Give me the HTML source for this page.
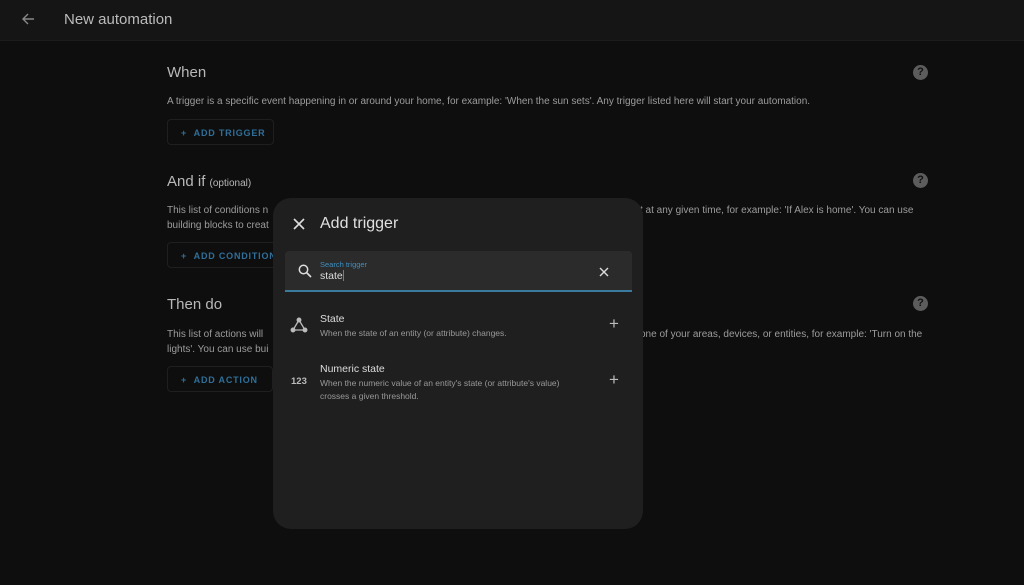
<!DOCTYPE html>
<html><head><meta charset="utf-8"><style>
*{margin:0;padding:0;box-sizing:border-box}
body{width:1024px;height:585px;background:#0e0e0e;font-family:"Liberation Sans",sans-serif;position:relative;overflow:hidden;color:#aaa}
.hdr{position:absolute;left:0;top:0;width:1024px;height:41px;background:#151515;border-bottom:1px solid #1c1c1c}
.abs{position:absolute;white-space:nowrap}
.h{font-size:15px;color:#b8b8b8}
.p{font-size:10px;color:#9c9c9c}
.btn{position:absolute;white-space:nowrap;height:26px;border:1px solid #1f1f1f;border-radius:4px;color:#2f6f99;font-size:9px;font-weight:bold;letter-spacing:0.8px;padding:8px 0 0 13px}
.q{position:absolute;width:15px;height:15px;border-radius:50%;background:#5c5c5c;color:#111;font-size:11px;font-weight:bold;text-align:center;line-height:15px}
.dlg{position:absolute;left:273px;top:198px;width:370px;height:331px;background:#1f1f1f;border-radius:18px}
</style></head><body>
<div class="hdr"></div>
<svg class="abs" style="left:20px;top:11px" width="16" height="16" viewBox="0 0 16 16"><path d="M14 8H3M8 3L3 8l5 5" stroke="#888" stroke-width="1.4" fill="none"/></svg>
<div class="abs" style="left:64px;top:11px;font-size:15px;color:#bbb">New automation</div>

<div class="abs h" style="left:167px;top:64px">When</div>
<div class="abs p" style="left:167px;top:96px">A trigger is a specific event happening in or around your home, for example: 'When the sun sets'. Any trigger listed here will start your automation.</div>
<div class="btn" style="left:167px;top:119px;width:107px">+&nbsp;&nbsp;ADD TRIGGER</div>
<div class="q" style="left:913px;top:65px">?</div>

<div class="abs h" style="left:167px;top:173px">And if <span style="font-size:10px">(optional)</span></div>
<div class="abs p" style="left:167px;top:205px">This list of conditions n</div>
<div class="abs p" style="left:167px;top:220px">building blocks to creat</div>
<div class="abs p" style="left:640px;top:205px">t at any given time, for example: 'If Alex is home'. You can use</div>
<div class="btn" style="left:167px;top:242px;width:120px">+&nbsp;&nbsp;ADD CONDITION</div>
<div class="q" style="left:913px;top:173px">?</div>

<div class="abs h" style="left:167px;top:296px">Then do</div>
<div class="abs p" style="left:167px;top:329px">This list of actions will</div>
<div class="abs p" style="left:167px;top:344px">lights'. You can use bui</div>
<div class="abs p" style="left:640px;top:329px">one of your areas, devices, or entities, for example: 'Turn on the</div>
<div class="btn" style="left:167px;top:366px;width:106px">+&nbsp;&nbsp;ADD ACTION</div>
<div class="q" style="left:913px;top:296px">?</div>

<div class="dlg">
<svg class="abs" style="left:19px;top:19px" width="14" height="14" viewBox="0 0 14 14"><path d="M2 2l10 10M12 2L2 12" stroke="#ddd" stroke-width="1.6"/></svg>
<div class="abs" style="left:47px;top:17px;font-size:16px;color:#e0e0e0">Add trigger</div>
<div class="abs" style="left:12px;top:53px;width:347px;height:41px;background:#2b2b2b;border-radius:4px 4px 0 0;border-bottom:2px solid #3a7a9e"></div>
<svg class="abs" style="left:25px;top:66px" width="14" height="14" viewBox="0 0 14 14"><circle cx="5.5" cy="5.5" r="4.2" stroke="#ddd" stroke-width="1.5" fill="none"/><path d="M8.5 8.5L13 13" stroke="#ddd" stroke-width="1.7"/></svg>
<div class="abs" style="left:47px;top:62px;font-size:7.5px;color:#3d8fc0">Search trigger</div>
<div class="abs" style="left:47px;top:72px;font-size:10.5px;color:#ddd">state<span style="display:inline-block;width:1px;height:11px;background:#3d8fc0;vertical-align:-2px"></span></div>
<svg class="abs" style="left:326px;top:69px" width="10" height="10" viewBox="0 0 10 10"><path d="M1 1l8 8M9 1L1 9" stroke="#ddd" stroke-width="1.4"/></svg>

<svg class="abs" style="left:17px;top:119px" width="18" height="16" viewBox="0 0 18 16"><g stroke="#bbb" stroke-width="1.3" fill="#bbb"><path d="M9 3L3 13H15Z" fill="none"/><circle cx="9" cy="3" r="1.8"/><circle cx="3" cy="13" r="1.8"/><circle cx="15" cy="13" r="1.8"/></g></svg>
<div class="abs" style="left:47px;top:115px;font-size:10.5px;color:#ddd">State</div>
<div class="abs" style="left:47px;top:130px;font-size:8.5px;color:#999">When the state of an entity (or attribute) changes.</div>
<div class="abs" style="left:336px;top:116px;font-size:17px;color:#bbb">+</div>

<div class="abs" style="left:18px;top:178px;font-size:9.5px;font-weight:bold;color:#bbb">123</div>
<div class="abs" style="left:47px;top:165px;font-size:10.5px;color:#ddd">Numeric state</div>
<div class="abs" style="left:47px;top:180px;font-size:8.5px;color:#999">When the numeric value of an entity's state (or attribute's value)</div>
<div class="abs" style="left:47px;top:193px;font-size:8.5px;color:#999">crosses a given threshold.</div>
<div class="abs" style="left:336px;top:172px;font-size:17px;color:#bbb">+</div>
</div>
</body></html>
